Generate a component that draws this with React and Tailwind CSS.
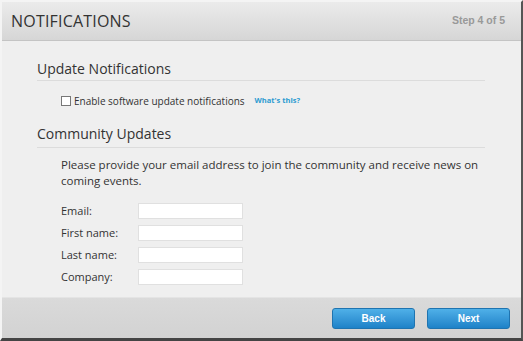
import React from 'react';

const FIELDS = ['Email:', 'First name:', 'Last name:', 'Company:'];

export default function App() {
  return (
    <div className="w-[523px] h-[341px] bg-white font-['Open_Sans',sans-serif]">
      <div className="w-[523px] h-[341px] flex flex-col border-t-2 border-l-2 border-r-2 border-b-[3px] border-t-[#f4f4f4] border-l-[#f4f4f4] border-r-[#555] border-b-[#444] bg-[#efefef]">
        {/* header */}
        <div className="h-[39px] shrink-0 flex items-center justify-between pl-[9px] pr-[16px] bg-gradient-to-b from-[#ebebeb] to-[#d6d6d6] border-b border-[#c4c4c4]">
          <span className="text-[16px] text-[#333] tracking-[0.2px]">NOTIFICATIONS</span>
          <span className="text-[10.5px] font-bold text-[#999] font-['Liberation_Sans',sans-serif]">Step 4 of 5</span>
        </div>

        {/* body */}
        <div className="flex-1 pl-[35px] pr-[36px] pt-[18px]">
          <h2 className="text-[14px] text-[#333] leading-[20px] pb-[1px] border-b border-[#dcdcdc]">Update Notifications</h2>
          <div className="flex items-center pl-[24px] mt-[12px] h-[16px]">
            <span className="w-[10px] h-[10px] border border-[#777] bg-white mr-[3px]" />
            <span className="text-[10px] text-[#333]">Enable software update notifications</span>
            <span className="ml-[10px] text-[7.5px] font-bold text-[#2b9bd1]">What's this?</span>
          </div>

          <h2 className="mt-[15px] text-[14px] text-[#333] leading-[20px] pb-[3px] border-b border-[#dcdcdc]">Community Updates</h2>
          <p className="pl-[24px] mt-[9px] text-[11.5px] leading-[16px] text-[#333]">
            Please provide your email address to join the community and receive news on coming events.
          </p>

          <div className="pl-[24px] mt-[14px] flex flex-col gap-[6px]">
            {FIELDS.map((f) => (
              <div key={f} className="flex items-center h-[16px]">
                <span className="w-[77px] text-[11px] text-[#333]">{f}</span>
                <div className="w-[105px] h-[16px] bg-white border border-[#e0e0e0]" />
              </div>
            ))}
          </div>
        </div>

        {/* footer */}
        <div className="h-[41px] shrink-0 flex items-center justify-end gap-[12px] pr-[11px] bg-gradient-to-b from-[#dadada] to-[#d2d2d2] border-t border-[#e4e4e4]">
          {['Back', 'Next'].map((b) => (
            <button
              key={b}
              className="w-[83px] h-[21px] rounded-[3px] border border-[#1f74b0] bg-gradient-to-b from-[#4fb0e8] to-[#1d82c8] text-white text-[10px] font-bold font-['Liberation_Sans',sans-serif]"
            >
              {b}
            </button>
          ))}
        </div>
      </div>
    </div>
  );
}
